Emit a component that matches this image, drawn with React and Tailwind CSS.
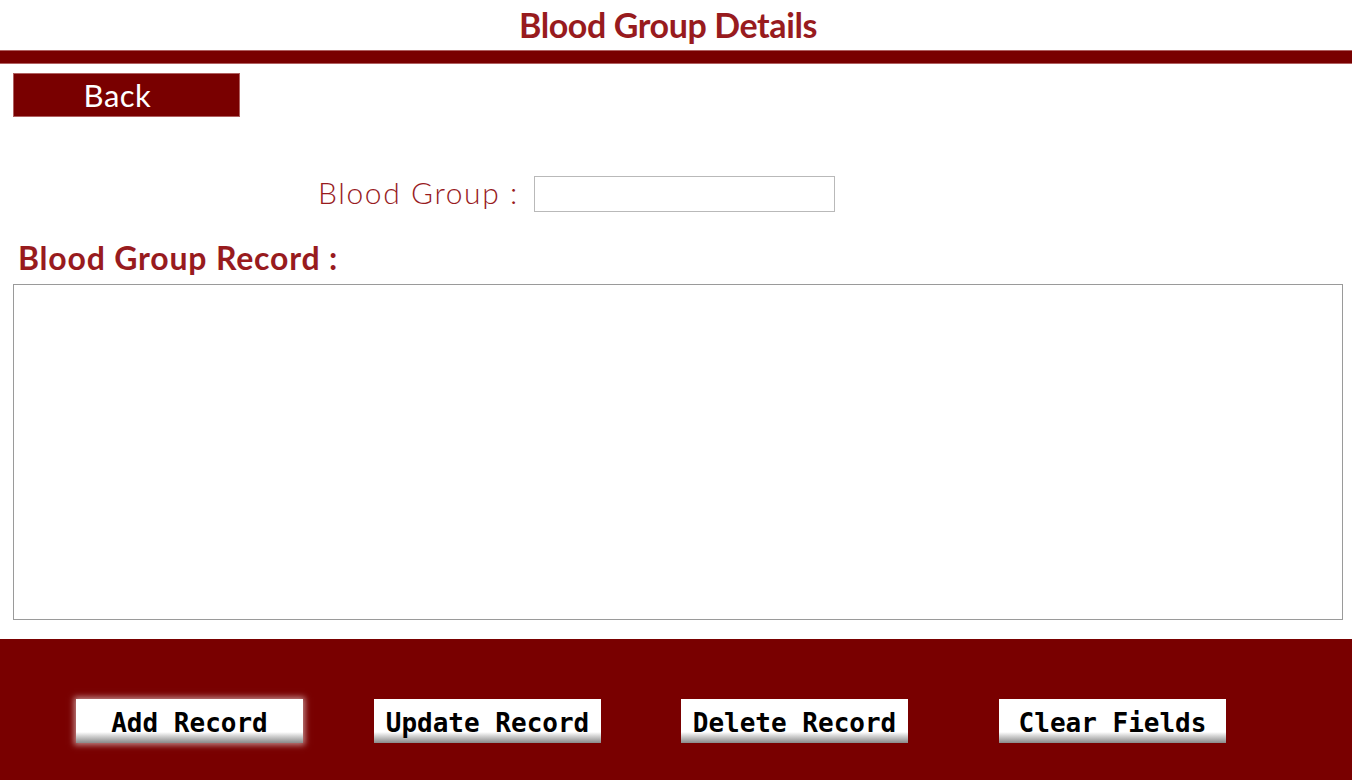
export default function App() {
  const buttons = [
    { label: 'Add Record', x: 'ml-[76px]', glow: true },
    { label: 'Update Record', x: 'ml-[71px]' },
    { label: 'Delete Record', x: 'ml-[80px]' },
    { label: 'Clear Fields', x: 'ml-[91px]' },
  ]

  return (
    <div className="relative h-[780px] w-[1352px] overflow-hidden bg-white font-['Lato',sans-serif]">
      {/* Header */}
      <h1 className="h-[50px] pr-[16px] pt-[6px] text-center text-[34px] font-bold leading-[38px] tracking-[-0.4px] text-[#981b1e]">
        Blood Group Details
      </h1>
      <div className="h-[14px] border-y border-[#b06060] bg-[#790000]" />

      {/* Back */}
      <button className="ml-[13px] mt-[9px] flex h-[44px] w-[227px] items-center justify-center border border-[#b06060] bg-[#790000] pr-[18px] text-[31px] font-normal leading-none tracking-[0.5px] text-white">
        Back
      </button>

      {/* Blood group field */}
      <div className="mt-[59px] flex items-center">
        <label className="ml-[318px] -mt-[4px] text-[30px] font-light leading-none tracking-[1.6px] text-[#981b1e]">
          Blood Group :
        </label>
        <input
          type="text"
          className="ml-[15px] h-[36px] w-[301px] border border-[#b9b9b9] bg-white outline-none"
        />
      </div>

      {/* Record heading */}
      <h2 className="ml-[18px] mt-[28px] text-[32px] font-bold leading-[36px] tracking-[0.8px] text-[#981b1e]">
        Blood Group Record :
      </h2>

      {/* Record table */}
      <div className="ml-[13px] mt-[8px] h-[336px] w-[1330px] border border-[#9a9a9a] bg-white" />

      {/* Footer actions */}
      <div className="mt-[19px] flex h-[141px] items-start bg-[#790000] pt-[60px]">
        {buttons.map((b) => (
          <button
            key={b.label}
            className={`${b.x} flex h-[44px] w-[227px] items-center justify-center bg-gradient-to-b from-white via-white via-[75%] to-[#8a8a8a] pt-[4px] font-['DejaVu_Sans_Mono',monospace] text-[26px] font-bold leading-none text-black ${b.glow ? 'shadow-[0_0_6px_2px_rgba(255,255,255,0.55)]' : ''}`}
          >
            {b.label}
          </button>
        ))}
      </div>
    </div>
  )
}
